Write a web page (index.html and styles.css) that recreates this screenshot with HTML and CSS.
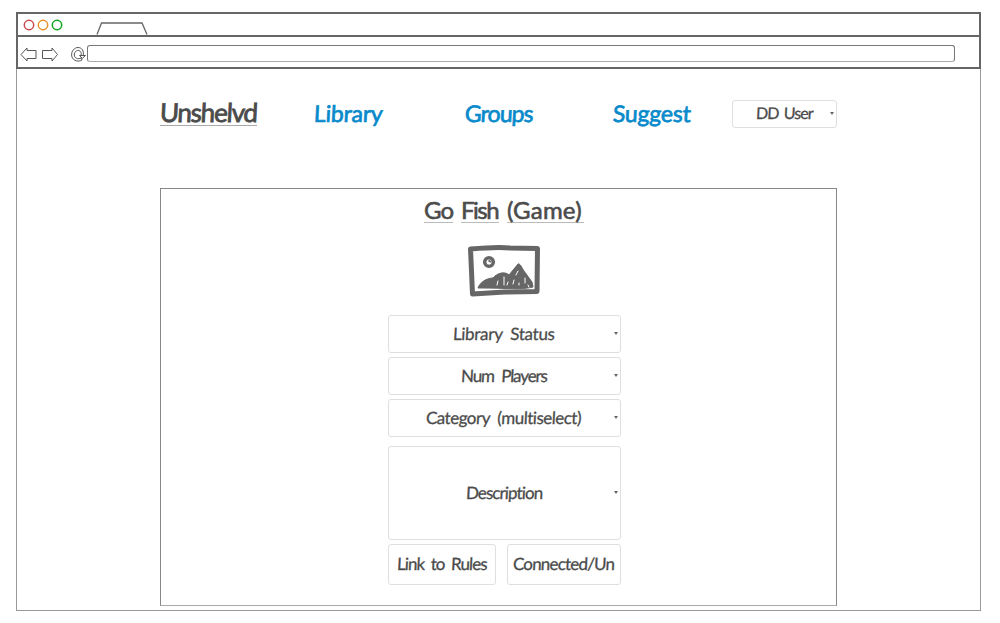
FILE: index.html
```html
<!DOCTYPE html>
<html lang="en">
<head>
<meta charset="utf-8">
<title>Unshelvd</title>
<link rel="stylesheet" href="styles.css">
</head>
<body>
<div class="window">
  <header class="chrome">
    <div class="titlebar">
      <svg class="lights" width="42" height="14" viewBox="0 0 42 14"><circle cx="7" cy="7" r="4.7" stroke="#c94a50"/><circle cx="21" cy="7" r="4.7" stroke="#e6912c"/><circle cx="35" cy="7" r="4.7" stroke="#0ea51c"/></svg>
      <svg class="tab" width="52" height="13" viewBox="0 0 52 13"><path d="M1 12.5 5.5 1H46L51 12.5"/></svg>
    </div>
    <div class="toolbar">
      <svg class="tools" width="67" height="20" viewBox="0 0 67 20"><path d="M1 10.500 7 4V6.500H16V14.500H7V17ZM37.500 10.500 32 4V6.500H22.500V14.500H32V17Z"/><path d="M62 16C59 18 53 17.500 51.700 12C51 7 54.500 3.500 58 3.500C62 3.500 64 7 63.300 11.500M61 14C58 15.500 54.500 14.500 54.300 11C54 8 57 5.700 59 6.500C61.300 7.500 61.500 9 61 11.500M59.500 11.500H65.500L62.300 14.300ZM61 14 62 16"/></svg>
      <div class="address"></div>
    </div>
  </header>
  <main class="page">
    <nav class="nav">
      <a class="brand"><span class="label brand-label">Unshelvd</span></a>
      <a class="link"><span class="label library">Library</span></a>
      <a class="link"><span class="label groups">Groups</span></a>
      <a class="link"><span class="label suggest">Suggest</span></a>
      <div class="box user"><span class="label">DD User</span><i class="caret"></i></div>
    </nav>
    <section class="panel">
      <h1 class="title"><span class="word go">Go</span><span class="word fish">Fish</span><span class="word game">(Game)</span></h1>
      <svg class="picture" width="74" height="53" viewBox="0 0 74 53">
        <path class="frame" d="M3.500 5C20 3.500 31 2.500 43 4L70.500 4.500 70 47.500 38 48 5.500 50 4.500 27Z"/>
        <circle class="sun" cx="22" cy="18" r="4.300"/>
        <path class="sun-mark" d="M21.500 16.500 24 18"/>
        <path class="hills" d="M11 44C13 38 20 34 26 34C30 29 38 27 42 31L51 20C53 19 55 24 57 27L65 38 66 43C55 46 40 44 11 44Z"/>
        <path class="hatch" d="M30 41 31 37M37 33V41M40 41 41 38M49 31 51 27M46 40 47 36M52 39V41M58 34V39M61 41 62 43"/>
      </svg>
      <div class="fields">
        <div class="box field"><span class="label status">Library Status</span><i class="caret"></i></div>
        <div class="box field"><span class="label players">Num Players</span><i class="caret"></i></div>
        <div class="box field"><span class="label category">Category (multiselect)</span><i class="caret"></i></div>
        <div class="box field description"><span class="label desc">Description</span><i class="caret"></i></div>
        <div class="actions">
          <div class="box rules"><span class="label">Link to Rules</span></div>
          <div class="box connected"><span class="label">Connected/Un</span></div>
        </div>
      </div>
    </section>
  </main>
</div>
</body>
</html>
```

FILE: styles.css
```css
* { box-sizing: border-box; }
body { margin: 0; padding: 12px 19px 12px 16px; height: 623px; background: #fff; color: #4b4b4b; font-family: Lato, "Open Sans", sans-serif; font-size: 17px; overflow: hidden; }
svg { display: block; fill: none; flex: none; }
.window { height: 599px; border: 1px solid #999; border-top: 0; }
.chrome { margin: 0 -1px; height: 57px; border: 2px solid #666; }
.titlebar { height: 23px; display: flex; border-bottom: 2px solid #666; }
.lights { margin: 4px 0 0 4px; stroke-width: 1.5; }
.tab { margin: 8px 0 0 32px; stroke: #666; stroke-width: 1.3; }
.toolbar { height: 30px; padding-top: 3px; display: flex; align-items: center; }
.tools { margin-left: 2px; stroke: #555; stroke-width: 1; }
.address { width: 868px; height: 17px; border: 1px solid #777; border-bottom-color: #aaa; border-radius: 3px; }
.page { width: 677px; margin: 0 0 0 143px; }
.nav { height: 119px; padding-top: 31px; display: flex; align-items: flex-start; }
.label, .word { white-space: nowrap; line-height: 1; -webkit-text-stroke: .3px currentColor; transform: skewX(-3deg); }
.brand { width: 97px; height: 26px; border-bottom: 1px solid #aaa; display: flex; }
.brand-label { font-size: 26px; letter-spacing: -1.2px; margin-top: -1px; -webkit-text-stroke-width: .8px; }
.link { color: #078acb; font-size: 23px; padding-top: 2px; display: flex; }
.link .label { -webkit-text-stroke-width: .7px; }
.library { width: 70px; margin-left: 57px; letter-spacing: -.2px; }
.groups { width: 70px; margin-left: 81px; letter-spacing: -.9px; }
.suggest { width: 79px; margin-left: 78px; letter-spacing: -.2px; }
.box { position: relative; display: flex; align-items: center; justify-content: center; border: 1px solid #dfdfdf; border-radius: 3px; }
.box .label { margin-top: -2px; }
.user { width: 105px; height: 28px; margin-left: auto; }
.user .label { font-size: 16px; letter-spacing: -.9px; word-spacing: 2px; }
.status { letter-spacing: -.3px; word-spacing: 4px; }
.players { letter-spacing: -1.1px; word-spacing: 4px; }
.category { letter-spacing: -.5px; word-spacing: 4px; }
.desc { letter-spacing: -.9px; }
.caret { position: absolute; right: 2px; top: calc(50% - 2px); border: 2.5px solid transparent; border-top: 3px solid #666; border-bottom: 0; }
.panel { height: 418px; border: 1px solid #888; border-bottom-color: #aaa; display: flex; flex-direction: column; align-items: center; padding-left: 11px; }
.title { margin: 8px 0 0; height: 27px; display: flex; gap: 8px; font-weight: 400; font-size: 24px; }
.word { height: 26px; padding-top: 1px; border-bottom: 1px solid #bbb; transform: none; -webkit-text-stroke-width: .6px; }
.go { width: 29px; letter-spacing: -1px; }
.fish { width: 38px; letter-spacing: -1.5px; }
.game { width: 77px; letter-spacing: .2px; }
.picture { margin-top: 20px; stroke: #666; }
.frame { stroke-width: 5; stroke-linejoin: round; }
.sun { stroke-width: 3.5; }
.sun-mark { stroke-width: 2; }
.hills { fill: #666; stroke-width: 1; }
.hatch { stroke: #fff; stroke-width: 1; stroke-linecap: round; }
.fields { width: 233px; margin-top: 18px; display: flex; flex-direction: column; gap: 4px; }
.field { height: 38px; }
.description { height: 94px; margin-top: 5px; }
.actions { display: flex; justify-content: space-between; height: 41px; }
.rules { width: 108px; }
.connected { width: 114px; }
.rules .label { letter-spacing: -.9px; word-spacing: 3px; }
.connected .label { letter-spacing: -.8px; }
```
